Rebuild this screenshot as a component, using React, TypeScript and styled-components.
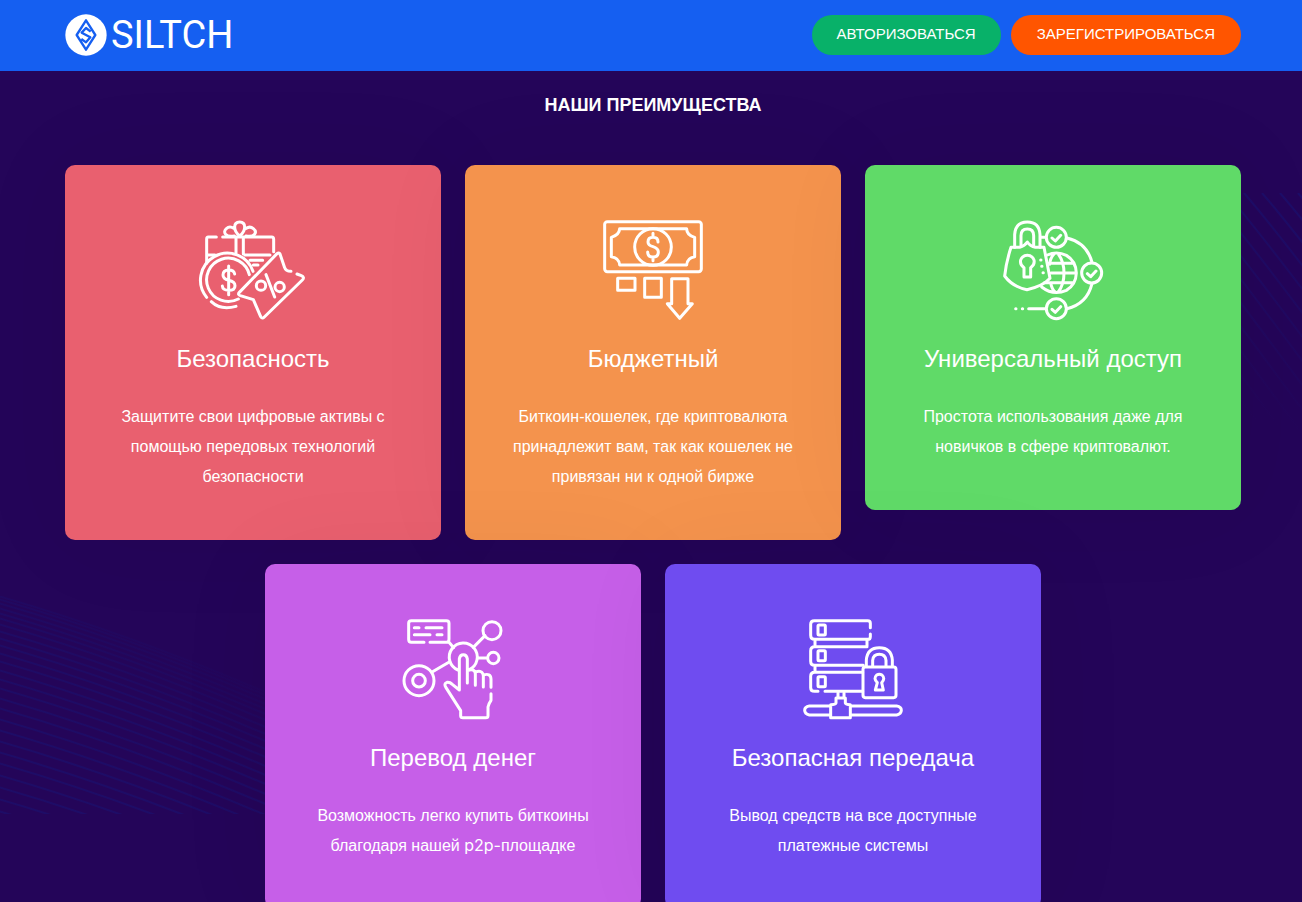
import React from "react";
import styled, { createGlobalStyle } from "styled-components";

const GlobalStyle = createGlobalStyle`
  *, *::before, *::after { box-sizing: border-box; }
  body {
    margin: 0;
    background: #240559;
    color: #fff;
    font-family: "Liberation Sans", Arial, sans-serif;
  }
  h1, h2, h3, p { margin: 0; font-weight: 400; }
`;

const Page = styled.div`
  position: relative;
  overflow: hidden;
  min-height: 100vh;
`;

const Header = styled.header`
  display: flex;
  align-items: center;
  justify-content: space-between;
  height: 71px;
  padding: 0 61px 1px 65px;
  background: #155ff1;
`;

const Logo = styled.a`
  display: flex;
  align-items: center;
  gap: 4px;
  color: #fff;
  text-decoration: none;
  font: 400 38px/42px Roboto, sans-serif;
`;

const Actions = styled.nav`
  display: flex;
  gap: 10px;
`;

const PillButton = styled.button<{ $color: string; $side: number }>`
  height: 40px;
  padding: 0 ${(p) => p.$side}px 2px;
  border: 0;
  border-radius: 20px;
  background: ${(p) => p.$color};
  color: #fff;
  font: 15px/20px "Liberation Sans", Arial, sans-serif;
  cursor: pointer;
`;

const Section = styled.section`
  position: relative;
  padding: 22px 61px 60px 65px;
`;

const Heading = styled.h2`
  margin-bottom: 48px;
  text-align: center;
  font-size: 18px;
  line-height: 24px;
  && { font-weight: 700; }
`;

const Cards = styled.div`
  display: flex;
  flex-wrap: wrap;
  align-items: flex-start;
  justify-content: center;
  gap: 24px;
`;

const Card = styled.article<{ $color: string }>`
  display: flex;
  flex-direction: column;
  align-items: center;
  flex: 0 0 calc((100% - 48px) / 3);
  padding: 55px 45px 48px;
  border-radius: 10px;
  background: ${(p) => p.$color};
  box-shadow: 0 0 100px rgba(0, 0, 0, 0.06);
  text-align: center;
`;

const CardIcon = styled.svg`
  width: 100px;
  height: 100px;
  overflow: visible;
  fill: none;
  stroke: #fff;
  stroke-width: 9;
  stroke-linecap: round;
  stroke-linejoin: round;
`;

const CardTitle = styled.h3`
  margin: 24px 0 28px;
  font-size: 24px;
  line-height: 30px;
`;

const CardText = styled.p`
  font-size: 16px;
  line-height: 30px;
`;

const Latin = styled.span`
  font-family: Inter, sans-serif;
  line-height: 16px;
`;

const Waves = styled.svg<{ $side: "left" | "right" }>`
  position: absolute;
  top: ${(p) => (p.$side === "left" ? 596 : 193)}px;
  ${(p) => p.$side}: 0;
  fill: none;
  stroke-width: 2;
`;

const leftStarts = [0, 3, 7, 12, 17, 22, 28, 35, 42, 49, 57, 65, 74, 83, 92, 102, 112, 123, 134, 145, 156, 167, 179, 191, 203, 215];

const LeftWaves = () => (
  <Waves $side="left" width="660" height="218" viewBox="0 0 660 218" aria-hidden="true">
    <defs>
      <linearGradient id="fadeLeft" gradientUnits="userSpaceOnUse" x1="150" y1="218" x2="260" y2="20">
        <stop offset="0" stopColor="#1a1170" stopOpacity="0.6" />
        <stop offset="0.4" stopColor="#1a1170" stopOpacity="0.5" />
        <stop offset="0.8" stopColor="#1a1170" stopOpacity="0" />
      </linearGradient>
    </defs>
    {leftStarts.map((y) => (
      <path key={y} stroke="url(#fadeLeft)" d={`M-2 ${y}Q130 ${y + 38} 270 ${y + 98}T540 ${y + 230}`} />
    ))}
  </Waves>
);

const RightWaves = () => (
  <Waves $side="right" width="70" height="270" viewBox="0 0 70 270" aria-hidden="true">
    <defs>
      <linearGradient id="fadeRight" gradientUnits="userSpaceOnUse" x1="70" y1="0" x2="0" y2="220">
        <stop offset="0" stopColor="#1a1170" stopOpacity="0.7" />
        <stop offset="1" stopColor="#1a1170" stopOpacity="0" />
      </linearGradient>
    </defs>
    {Array.from({ length: 16 }, (_, i) => 66 - i * 18).map((x) => (
      <path key={x} stroke="url(#fadeRight)" d={`M${x} 0Q${x + 54} 62 ${x + 220} 290`} />
    ))}
  </Waves>
);

const LogoMark = () => (
  <svg width="42" height="42" viewBox="0 0 126 126" aria-hidden="true">
    <circle cx="63" cy="63" r="62" fill="#fff" />
    <path
      d="M63 19 91 63 63 107 35 63ZM77 53 63 42 50 56 76 70 63 85 49 75"
      fill="none"
      stroke="#155ff1"
      strokeWidth="7"
      strokeLinejoin="round"
    />
  </svg>
);

const GiftIcon = () => (
  <CardIcon viewBox="39 30 300 300" aria-hidden="true">
    <path d="M79 81H55Q50 81 50 87V160M98 81H245Q251 81 251 88V125M50 135H75M165 135H240M138 81V128M160 81V132M190 165H204M180 151H218" />
    <path d="M133 78C105 83 98 65 109 56Q119 47 131 55M168 78C196 83 202 65 190 56Q180 47 169 55M149 78C129 62 129 36 149 36S169 62 149 78Z" />
    <path d="M50 262A81 81 0 1 1 189 184M64 275Q92 302 138 289M145 267A65 65 0 1 1 178 194" />
    <path d="M134 192Q132 180 116 180Q99 180 99 195Q99 207 116 211Q135 215 135 227Q135 241 116 241Q98 241 97 228M116 168V254" />
    <path d="M303 184Q287 184 284 173L270 132Q267 126 261 131L148 247Q142 254 151 257L190 269L212 320Q216 328 223 321L337 210Q345 202 334 197L321 192M228 194 254 261" />
    <circle cx="213" cy="227" r="14" />
    <circle cx="269" cy="231" r="14" />
  </CardIcon>
);

const CashIcon = () => (
  <CardIcon viewBox="39 30 300 300" aria-hidden="true">
    <rect x="44" y="35" width="290" height="150" rx="8" />
    <path d="M89 56H290Q290 75 314 82V140Q291 144 290 165H89Q88 144 64 140V82Q88 75 89 56Z" />
    <circle cx="189" cy="111" r="55" />
    <path d="M204 96Q204 82 189 82T174 96Q174 106 189 110Q205 115 205 126Q205 141 189 141T173 126M189 70V82M189 141V152" />
    <rect x="83" y="205" width="52" height="36" />
    <rect x="164" y="205" width="50" height="57" />
    <path d="M245 206H294V281H307L269 325L232 281H245Z" />
  </CardIcon>
);

const AccessIcon = () => (
  <CardIcon viewBox="39 30 300 300" aria-hidden="true">
    <path d="M74 112V74Q76 36 112 36T150 74V112M93 107V77Q93 57 112 57T131 77V107" />
    <path d="M63 112H89Q104 108 112 96Q121 109 136 112H162L180 205Q159 229 111 239Q67 230 44 198Q48 158 63 112Z" />
    <path d="M102 173Q89 164 92 150Q98 136 112 136T132 150Q135 164 122 173V201H102Z" />
    <path d="M152 150H153M155 169H156M159 188H160M77 296H78M97 296H98M116 296H166M153 82H166M231 84Q291 99 306 157M306 221Q291 282 231 296" />
    <path d="M172 135Q201 122 229 136Q258 153 259 189Q258 224 229 241Q190 258 155 231M177 160H251M183 189H258M163 218H251M192 132Q180 145 179 163M205 132Q222 155 222 189T205 246M182 218Q185 238 197 247" />
    <circle cx="199" cy="82" r="30" />
    <circle cx="305" cy="189" r="30" />
    <circle cx="199" cy="296" r="30" />
    <path d="M186 84 196 93 212 76M292 191 302 200 318 183M186 298 196 307 212 290" />
  </CardIcon>
);

const TransferIcon = () => (
  <CardIcon viewBox="39 27 300 300" aria-hidden="true">
    <path d="M102 97H64Q56 97 56 88V40Q56 32 64 32H169Q177 32 177 40V88Q177 97 169 97H120M177 97 191 113M250 112 285 77M263 144H290M179 155 125 187" />
    <path d="M73 53H87M108 53H156M73 74H120M141 74H156" />
    <circle cx="306" cy="62" r="27" />
    <circle cx="310" cy="144" r="17" />
    <circle cx="87" cy="212" r="45" />
    <circle cx="87" cy="212" r="19" />
    <path d="M204 180A42 42 0 1 1 238 179" />
    <path d="M208 240V146Q210 134 220 134T232 146V219M233 181Q254 174 256 191V226M256 186Q278 179 280 197V231M280 195Q302 188 303 207V232M303 251V271Q296 281 294 291V317Q294 323 287 323H219Q212 323 212 317V302L168 233Q160 221 171 217Q180 216 187 223L208 240" />
  </CardIcon>
);

const ServerIcon = () => (
  <CardIcon viewBox="39 27 300 300" aria-hidden="true">
    <path d="M241 53V40Q241 32 233 32H73Q62 32 62 43V76Q62 88 74 88H233Q241 88 241 80V72M231 110H74Q62 110 62 122V154Q62 166 74 166H220M218 187H74Q62 187 62 199V233Q62 244 74 244H84M105 244H218M75 90V108M231 90V108M75 168V185" />
    <rect x="84" y="45" width="22" height="30" rx="3" />
    <rect x="84" y="122" width="22" height="30" rx="3" />
    <rect x="84" y="200" width="22" height="30" rx="3" />
    <rect x="219" y="171" width="99" height="92" rx="7" />
    <path d="M229 169V150Q232 113 268 113T307 150V169M248 169V151Q250 133 268 133T288 151V169M262 218Q249 205 260 195Q268 190 276 195Q287 205 275 218L280 240H256Z" />
    <path d="M144 248V262M162 248V262M138 264H166V279Q168 284 181 284V323H122V284Q136 284 138 279ZM120 288H58Q44 290 44 301T58 315H120M184 288H320Q334 290 334 301T320 315H184" />
  </CardIcon>
);

const features = [
  { color: "#e9606f", Icon: GiftIcon, title: "Безопасность", text: "Защитите свои цифровые активы с помощью передовых технологий безопасности" },
  { color: "#f4934d", Icon: CashIcon, title: "Бюджетный", text: "Биткоин-кошелек, где криптовалюта принадлежит вам, так как кошелек не привязан ни к одной бирже" },
  { color: "#60da68", Icon: AccessIcon, title: "Универсальный доступ", text: "Простота использования даже для новичков в сфере криптовалют." },
  { color: "#c65fe8", Icon: TransferIcon, title: "Перевод денег", text: <>Возможность легко купить биткоины благодаря нашей <Latin>p2p-</Latin>площадке</> },
  { color: "#6f4cf0", Icon: ServerIcon, title: "Безопасная передача", text: "Вывод средств на все доступные платежные системы" },
];

export default function App() {
  return (
    <Page>
      <GlobalStyle />
      <LeftWaves />
      <RightWaves />
      <Header>
        <Logo href="#">
          <LogoMark />
          SILTCH
        </Logo>
        <Actions>
          <PillButton type="button" $color="#08b169" $side={25}>АВТОРИЗОВАТЬСЯ</PillButton>
          <PillButton type="button" $color="#ff5500" $side={26}>ЗАРЕГИСТРИРОВАТЬСЯ</PillButton>
        </Actions>
      </Header>
      <Section>
        <Heading>НАШИ ПРЕИМУЩЕСТВА</Heading>
        <Cards>
          {features.map(({ color, Icon, title, text }) => (
            <Card key={title} $color={color}>
              <Icon />
              <CardTitle>{title}</CardTitle>
              <CardText>{text}</CardText>
            </Card>
          ))}
        </Cards>
      </Section>
    </Page>
  );
}
